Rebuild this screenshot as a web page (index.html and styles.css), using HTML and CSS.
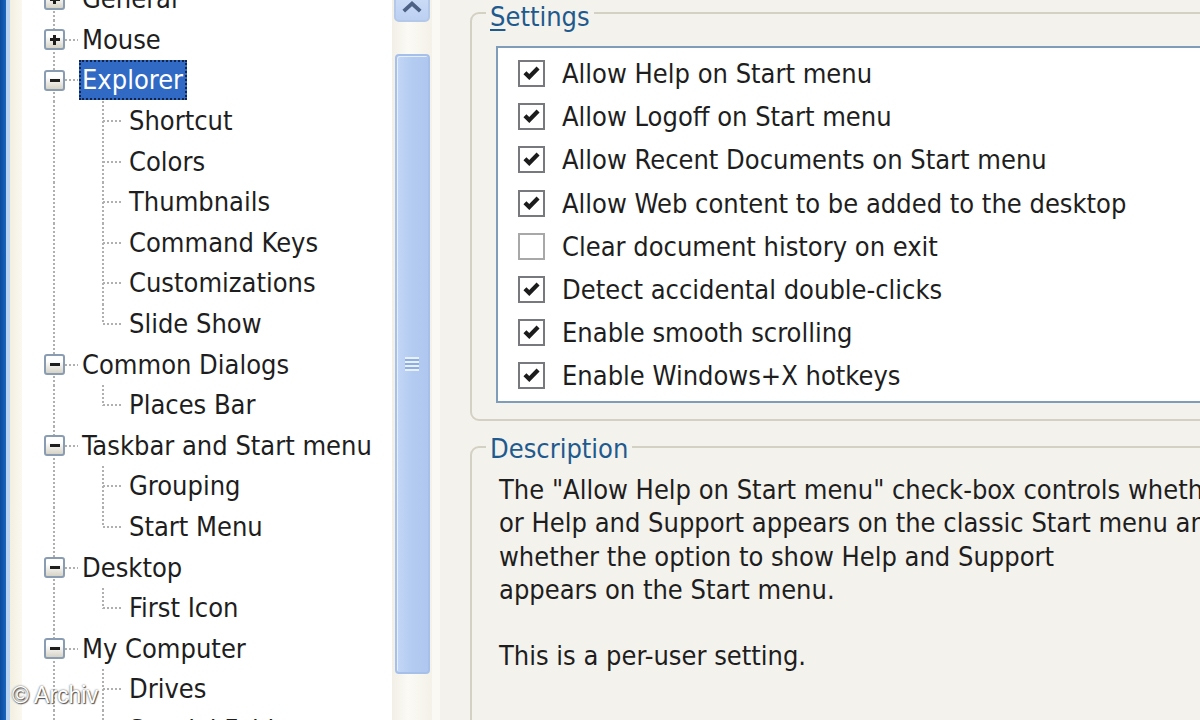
FILE: index.html
```html
<!DOCTYPE html>
<html lang="en">
<head>
  <meta charset="UTF-8">
  <title>Tweak UI - Explorer</title>
  <link rel="stylesheet" href="styles.css">
</head>
<body>
  <div class="window">
    <div class="frame"></div>
    <div class="frame-edge"></div>
    <div class="frame-pad"></div>

    <!-- arbol de categorias -->
    <div class="tree-pane">
      <ul class="tree">
        <li class="node top"><span class="guide"><span class="expander plus"></span></span><span class="label">General</span></li>
        <li class="node top"><span class="guide"><span class="expander plus"></span></span><span class="label">Mouse</span></li>
        <li class="node top"><span class="guide"><span class="expander"></span></span><span class="label selected">Explorer</span></li>
        <li class="node child"><span class="guide"></span><span class="branch"></span><span class="label">Shortcut</span></li>
        <li class="node child"><span class="guide"></span><span class="branch"></span><span class="label">Colors</span></li>
        <li class="node child"><span class="guide"></span><span class="branch"></span><span class="label">Thumbnails</span></li>
        <li class="node child"><span class="guide"></span><span class="branch"></span><span class="label">Command Keys</span></li>
        <li class="node child"><span class="guide"></span><span class="branch"></span><span class="label">Customizations</span></li>
        <li class="node child"><span class="guide"></span><span class="branch last"></span><span class="label">Slide Show</span></li>
        <li class="node top"><span class="guide"><span class="expander"></span></span><span class="label">Common Dialogs</span></li>
        <li class="node child"><span class="guide"></span><span class="branch last"></span><span class="label">Places Bar</span></li>
        <li class="node top"><span class="guide"><span class="expander"></span></span><span class="label">Taskbar and Start menu</span></li>
        <li class="node child"><span class="guide"></span><span class="branch"></span><span class="label">Grouping</span></li>
        <li class="node child"><span class="guide"></span><span class="branch last"></span><span class="label">Start Menu</span></li>
        <li class="node top"><span class="guide"><span class="expander"></span></span><span class="label">Desktop</span></li>
        <li class="node child"><span class="guide"></span><span class="branch last"></span><span class="label">First Icon</span></li>
        <li class="node top"><span class="guide"><span class="expander"></span></span><span class="label">My Computer</span></li>
        <li class="node child"><span class="guide"></span><span class="branch"></span><span class="label">Drives</span></li>
        <li class="node child"><span class="guide"></span><span class="branch"></span><span class="label">Special Folders</span></li>
      </ul>
    </div>

    <div class="scrollbar">
      <div class="sb-btn">
        <svg viewBox="0 0 16 10" width="22" height="14"><path d="M2 8 L8 2.5 L14 8" fill="none" stroke="#4d6185" stroke-width="2.8"/></svg>
      </div>
      <div class="sb-thumb"><span class="grip"></span></div>
    </div>
    <div class="sb-edge"></div>

    <!-- panel de opciones -->
    <div class="panel">
      <fieldset class="group settings">
        <legend><u>S</u>ettings</legend>
        <ul class="checklist">
          <li class="check-row"><span class="box on"></span>Allow Help on Start menu</li>
          <li class="check-row"><span class="box on"></span>Allow Logoff on Start menu</li>
          <li class="check-row"><span class="box on"></span>Allow Recent Documents on Start menu</li>
          <li class="check-row"><span class="box on"></span>Allow Web content to be added to the desktop</li>
          <li class="check-row"><span class="box"></span>Clear document history on exit</li>
          <li class="check-row"><span class="box on"></span>Detect accidental double-clicks</li>
          <li class="check-row"><span class="box on"></span>Enable smooth scrolling</li>
          <li class="check-row"><span class="box on"></span>Enable Windows+X hotkeys</li>
        </ul>
      </fieldset>

      <fieldset class="group description">
        <legend>Description</legend>
        <p class="desc-text">The "Allow Help on Start menu" check-box controls whether<br>or Help and Support appears on the classic Start menu and<br>whether the option to show Help and Support<br>appears on the Start menu.</p>
        <p class="desc-text">This is a per-user setting.</p>
      </fieldset>
    </div>

    <div class="watermark">© Archiv</div>
  </div>
</body>
</html>
```

FILE: styles.css
```css
/* Tweak UI ampliado */
body {
  margin: 0;
  padding: 0;
  font-family: "DejaVu Sans Condensed", "DejaVu Sans", sans-serif;
  font-stretch: condensed;
  font-size: 27px;
  color: #1e1e1e;
  background-color: #f4f2ec;
}

.window {
  position: relative;
  display: flex;
  width: 1200px;
  height: 720px;
  overflow: hidden;
}

.frame {
  width: 6px;
  flex: none;
  background: linear-gradient(90deg, #0b4a9c, #1a66c0);
}

.frame-edge {
  width: 4px;
  flex: none;
  background-color: #b9d3f2;
}

.frame-pad {
  width: 12px;
  flex: none;
  background: linear-gradient(90deg, #f3efe0, #faf8f0);
}

/* Arbol */
.tree-pane {
  width: 370px;
  flex: none;
  background-color: #ffffff;
  overflow: hidden;
}

.tree {
  list-style: none;
  margin: -21px 0 0 0;
  padding: 0;
}

.node {
  display: flex;
  align-items: center;
  height: 40.6px;
  white-space: nowrap;
}

.guide {
  width: 56px;
  height: 100%;
  flex: none;
  display: flex;
  align-items: center;
  background-image: repeating-linear-gradient(to bottom, #b0b0b0 0 2px, transparent 2px 4px);
  background-size: 2px 100%;
  background-position: 31px 0;
  background-repeat: no-repeat;
}

.top .guide {
  background-image:
    repeating-linear-gradient(to right, #b0b0b0 0 2px, transparent 2px 4px),
    repeating-linear-gradient(to bottom, #b0b0b0 0 2px, transparent 2px 4px);
  background-size: 14px 2px, 2px 100%;
  background-position: 43px 50%, 31px 0;
}

.branch {
  width: 48px;
  height: 100%;
  flex: none;
  background-image:
    repeating-linear-gradient(to right, #b0b0b0 0 2px, transparent 2px 4px),
    repeating-linear-gradient(to bottom, #b0b0b0 0 2px, transparent 2px 4px);
  background-size: 20px 2px, 2px 100%;
  background-position: 25px 50%, 24px 0;
  background-repeat: no-repeat;
}

.branch.last {
  background-size: 20px 2px, 2px 51%;
}

.expander {
  width: 17px;
  height: 17px;
  margin-left: 22px;
  border: 2px solid #8a9cb2;
  border-radius: 3px;
  background: linear-gradient(#ffffff 30%, #d6d3c6);
  display: flex;
  align-items: center;
  justify-content: center;
  position: relative;
}

.expander::before {
  content: '';
  width: 10px;
  height: 3px;
  background-color: #1e1e1e;
}

.expander.plus::after {
  content: '';
  position: absolute;
  width: 3px;
  height: 10px;
  background-color: #1e1e1e;
}

.label {
  height: 40px;
  line-height: 40px;
  padding: 0 4px 0 3px;
  margin-left: 1px;
}

.child .label {
  margin-left: 0;
}

.selected {
  background-color: #316ac5;
  color: #ffffff;
  outline: 2px dotted #13234a;
  outline-offset: -2px;
}

/* Barra de desplazamiento */
.scrollbar {
  width: 40px;
  flex: none;
  background: linear-gradient(90deg, #f1efe6, #fbfaf5 40%, #f3f1e8);
  display: flex;
  flex-direction: column;
  align-items: center;
}

.sb-btn {
  width: 36px;
  height: 42px;
  margin-top: -20px;
  border: 2px solid #b4c8ea;
  border-radius: 5px;
  background: linear-gradient(#d7e4fa, #bcd0f2);
  display: flex;
  align-items: flex-end;
  justify-content: center;
  padding-bottom: 6px;
  box-sizing: border-box;
}

.sb-thumb {
  width: 35px;
  height: 620px;
  margin-top: 32px;
  box-sizing: border-box;
  border: 2px solid #a6c0ea;
  border-radius: 4px;
  background: linear-gradient(90deg, #c3d7f6, #b3cbf1 50%, #b0c8ef);
  box-shadow: inset 1px 1px 0 #e4eefd;
  display: flex;
  align-items: center;
  justify-content: center;
}

.grip {
  width: 14px;
  height: 14px;
  background: repeating-linear-gradient(to bottom, #e8f0fd 0 2px, #8faee0 2px 4px);
}

.sb-edge {
  width: 8px;
  flex: none;
  background-color: #fbf9f4;
}

/* Panel derecho */
.panel {
  flex: 1;
  padding-left: 30px;
  overflow: hidden;
  background-color: #f4f2ec;
}

.group {
  width: 900px;
  margin: 0;
  border: 2px solid #d3d1c4;
  border-radius: 9px;
}

.group legend {
  color: #1f5a8e;
  padding: 8px 4px 0 4px;
  line-height: 32px;
}

.group legend u {
  text-decoration-thickness: 2px;
  text-underline-offset: 3px;
}

.settings {
  margin-top: -7px;
  padding: 13px 0 16px 24px;
}

.settings legend {
  margin-left: -10px;
}

.checklist {
  list-style: none;
  margin: 0;
  padding: 4px 0 0 0;
  height: 349px;
  background-color: #ffffff;
  border: 2px solid #7f9db9;
}

.check-row {
  display: flex;
  align-items: center;
  height: 43.2px;
  white-space: nowrap;
}

.box {
  width: 27px;
  height: 27px;
  margin: 0 17px 0 20px;
  box-sizing: border-box;
  border: 2px solid #a8a8a8;
  background-color: #ffffff;
  flex: none;
}

.box.on {
  border-color: #77797f;
  background: #ffffff url("data:image/svg+xml,%3Csvg xmlns='http://www.w3.org/2000/svg' viewBox='0 0 16 16'%3E%3Cpath d='M3 7.4 L6.3 10.7 L13 3.8' fill='none' stroke='%231c1c1c' stroke-width='3.2'/%3E%3C/svg%3E") center / 21px 21px no-repeat;
}

.description {
  margin-top: 8px;
  padding: 8px 0 0 27px;
  height: 320px;
}

.description legend {
  margin-left: -13px;
  padding-top: 4px;
}

.desc-text {
  margin: 0 0 33px 0;
  line-height: 33.3px;
  white-space: nowrap;
}

.watermark {
  position: absolute;
  left: 12px;
  bottom: 11px;
  font-family: "Liberation Sans", Arial, sans-serif;
  font-stretch: normal;
  font-size: 23px;
  color: #ffffff;
  text-shadow: 0 0 2px #444, 1px 1px 1px #555;
}
```
